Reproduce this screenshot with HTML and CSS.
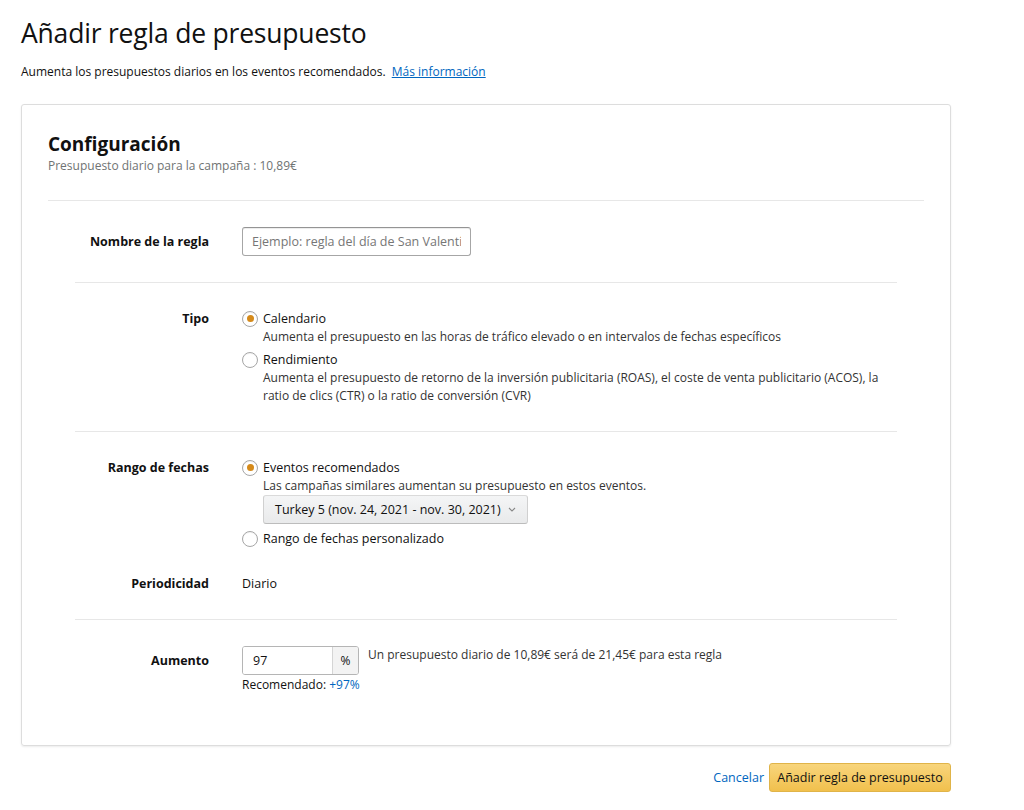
FILE: index.html
```html
<!DOCTYPE html>
<html lang="es">
<head>
    <meta charset="UTF-8">
    <meta name="viewport" content="width=device-width, initial-scale=1.0">
    <title>Añadir regla de presupuesto</title>
    <link rel="stylesheet" href="styles.css">
</head>
<body>
    <div id="page">
        <h1 class="page-title">Añadir regla de presupuesto</h1>
        <p class="page-intro">Aumenta los presupuestos diarios en los eventos recomendados. <a href="#" class="link">Más información</a></p>

        <div class="card">
            <div class="card-header">
                <h2>Configuración</h2>
                <p>Presupuesto diario para la campaña : 10,89€</p>
            </div>

            <div class="form">
                <div class="form-row">
                    <label class="form-label">Nombre de la regla</label>
                    <div class="form-field">
                        <input type="text" class="text-input" placeholder="Ejemplo: regla del día de San Valentín">
                    </div>
                </div>

                <div class="form-row">
                    <div class="form-label">Tipo</div>
                    <div class="form-field">
                        <div class="radio-option">
                            <span class="radio checked"></span>
                            <span class="radio-text">Calendario</span>
                        </div>
                        <p class="radio-desc">Aumenta el presupuesto en las horas de tráfico elevado o en intervalos de fechas específicos</p>
                        <div class="radio-option">
                            <span class="radio"></span>
                            <span class="radio-text">Rendimiento</span>
                        </div>
                        <p class="radio-desc">Aumenta el presupuesto de retorno de la inversión publicitaria (ROAS), el coste de venta publicitario (ACOS), la ratio de clics (CTR) o la ratio de conversión (CVR)</p>
                    </div>
                </div>

                <div class="form-row">
                    <div class="form-label">Rango de fechas</div>
                    <div class="form-field">
                        <div class="radio-option">
                            <span class="radio checked"></span>
                            <span class="radio-text">Eventos recomendados</span>
                        </div>
                        <p class="radio-desc">Las campañas similares aumentan su presupuesto en estos eventos.</p>
                        <div class="dropdown">
                            <span>Turkey 5 (nov. 24, 2021 - nov. 30, 2021)</span>
                            <svg width="8" height="5" viewBox="0 0 8 5"><path d="M1 1l3 3 3-3" fill="none" stroke="#888" stroke-width="1.1"/></svg>
                        </div>
                        <div class="radio-option">
                            <span class="radio"></span>
                            <span class="radio-text">Rango de fechas personalizado</span>
                        </div>
                    </div>
                    <div class="form-label sub-label">Periodicidad</div>
                    <div class="form-field sub-field">Diario</div>
                </div>

                <div class="form-row last">
                    <div class="form-label label-top">Aumento</div>
                    <div class="form-field">
                        <div class="increase">
                            <div class="addon-input">
                                <input type="text" value="97">
                                <span class="addon">%</span>
                            </div>
                            <span class="hint">Un presupuesto diario de 10,89€ será de 21,45€ para esta regla</span>
                        </div>
                        <p class="recommended">Recomendado: <span class="link-plain">+97%</span></p>
                    </div>
                </div>
            </div>
        </div>

        <div class="actions">
            <a href="#" class="cancel">Cancelar</a>
            <button class="primary-button">Añadir regla de presupuesto</button>
        </div>
    </div>
</body>
</html>
```

FILE: styles.css
```css
:root {
    --text: #111111;
    --text-muted: #6f7373;
    --link: #0066c0;
    --border: #dddddd;
    --divider: #e7e7e7;
    --radio-dot: #d58a1a;
}

* {
    margin: 0;
    padding: 0;
    box-sizing: border-box;
}

body {
    font-family: "Open Sans", sans-serif;
    font-size: 13px;
    line-height: 19px;
    color: var(--text);
    background: #ffffff;
}

#page {
    width: 951px;
    padding: 16px 0 0 21px;
}

.page-title {
    font-size: 26.5px;
    font-weight: 400;
    line-height: 34px;
    letter-spacing: -0.2px;
}

.page-intro {
    margin-top: 13px;
    font-size: 12px;
    line-height: 18px;
}

.page-intro .link {
    margin-left: 3px;
}

.link {
    color: var(--link);
    text-decoration: underline;
}

.link-plain {
    color: var(--link);
}

/* settings card */
.card {
    margin-top: 23px;
    border: 1px solid var(--border);
    border-radius: 3px;
    box-shadow: 0 1px 2px rgba(0, 0, 0, 0.08);
    padding: 26px 26px 0;
}

.card-header {
    padding-bottom: 25px;
    border-bottom: 1px solid var(--divider);
}

.card-header h2 {
    font-size: 19px;
    font-weight: 700;
    line-height: 26px;
}

.card-header p {
    font-size: 12px;
    line-height: 18px;
    color: var(--text-muted);
}

.form {
    padding: 0 27px;
}

.form-row {
    display: grid;
    grid-template-columns: 134px 1fr;
    column-gap: 33px;
    align-items: start;
    padding: 26px 0;
    border-bottom: 1px solid var(--divider);
}

.form-row:first-child {
    align-items: center;
}

.form-row.last {
    border-bottom: none;
    padding-bottom: 51px;
}

.form-label {
    text-align: right;
    font-weight: 700;
    font-size: 12.5px;
    line-height: 19px;
}

.label-top {
    padding-top: 5px;
}

.sub-label,
.sub-field {
    margin-top: 26px;
}

.form-field {
    font-size: 12.5px;
}

.text-input {
    width: 229px;
    height: 29px;
    padding: 0 9px;
    border: 1px solid #a6a6a6;
    border-top-color: #949494;
    border-radius: 3px;
    font-family: inherit;
    font-size: 12.5px;
    color: var(--text);
    box-shadow: 0 1px 0 rgba(255, 255, 255, 0.5), 0 1px 0 rgba(0, 0, 0, 0.07) inset;
}

.text-input::placeholder {
    color: #767676;
}

/* radio buttons */
.radio-option {
    display: flex;
    align-items: center;
    gap: 5px;
    height: 19px;
}

.radio-desc + .radio-option {
    margin-top: 4px;
}

.radio {
    width: 16px;
    height: 16px;
    flex-shrink: 0;
    border: 1px solid #a6a6a6;
    border-radius: 50%;
    background: #fff;
    display: flex;
    align-items: center;
    justify-content: center;
    box-shadow: 0 1px 0 rgba(0, 0, 0, 0.05) inset;
}

.radio.checked::after {
    content: '';
    width: 7px;
    height: 7px;
    border-radius: 50%;
    background: var(--radio-dot);
}

.radio-desc {
    padding-left: 21px;
    color: #333333;
    font-size: 12px;
    line-height: 18px;
    max-width: 670px;
}

.dropdown {
    margin: 0 0 5px 21px;
    width: 265px;
    height: 29px;
    padding: 0 11px 0 11px;
    display: flex;
    align-items: center;
    justify-content: space-between;
    border: 1px solid #d5d9d9;
    border-color: #dadada #d0d0d0 #bcbcbc;
    border-radius: 3px;
    background: linear-gradient(#f4f5f6, #e9eaeb);
    font-size: 12.5px;
}

/* increase input */
.increase {
    display: flex;
    align-items: flex-start;
    gap: 9px;
}

.addon-input {
    display: flex;
    width: 117px;
    height: 29px;
    border: 1px solid #b5b5b5;
    border-radius: 3px;
    overflow: hidden;
}

.addon-input input {
    width: 90px;
    border: none;
    border-right: 1px solid #d5d5d5;
    padding: 0 10px;
    font-family: inherit;
    font-size: 12.5px;
    color: var(--text);
}

.addon {
    flex: 1;
    display: flex;
    align-items: center;
    justify-content: center;
    background: #f3f3f3;
    font-size: 12px;
}

.hint {
    font-size: 12px;
    color: #333;
    line-height: 18px;
}

.recommended {
    margin-top: 1px;
    font-size: 12px;
    line-height: 18px;
}

/* footer actions */
.actions {
    display: flex;
    justify-content: flex-end;
    align-items: center;
    gap: 5px;
    margin-top: 17px;
}

.cancel {
    color: var(--link);
    text-decoration: none;
    font-size: 12.5px;
}

.primary-button {
    width: 182px;
    height: 29px;
    border: 1px solid #e0b449;
    border-radius: 3px;
    background: linear-gradient(#f8d57c, #f1c04d);
    font-family: inherit;
    font-size: 12.5px;
    color: var(--text);
    cursor: pointer;
}
```
